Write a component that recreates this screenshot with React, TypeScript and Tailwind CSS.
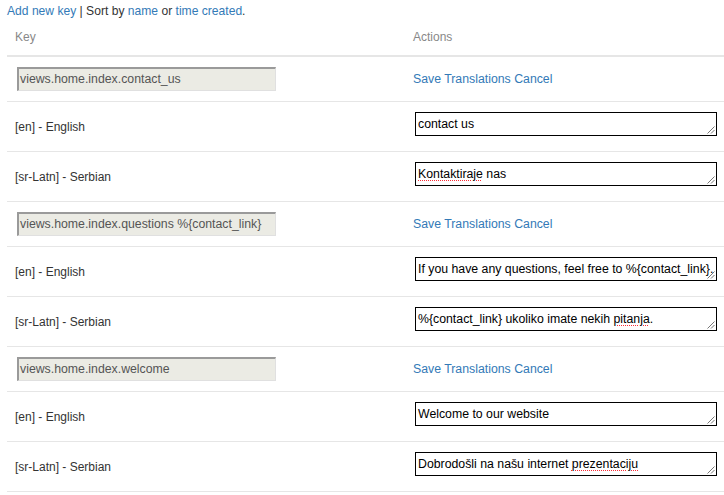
import React from "react";

const font = { fontFamily: '"Liberation Sans", Arial, sans-serif' };

function Resize() {
  return (
    <svg className="absolute right-[1px] bottom-[1px]" width="9" height="9" viewBox="0 0 9 9">
      <line x1="8.5" y1="1.5" x2="1.5" y2="8.5" stroke="#777" strokeWidth="1" />
      <line x1="8.5" y1="5" x2="5" y2="8.5" stroke="#777" strokeWidth="1" />
    </svg>
  );
}

function Spell({ children }: { children: React.ReactNode }) {
  return <span className="underline decoration-dotted decoration-red-500 decoration-1 underline-offset-2">{children}</span>;
}

function KeyRow({ k }: { k: string }) {
  return (
    <div className="flex h-[45px] border-b border-[#e6e6e6] items-center">
      <div className="w-[398px] pl-[10px]">
        <div className="w-[259px] h-[24px] bg-[#ebebe4] border-t-2 border-l-2 border-t-[#9a9a9a] border-l-[#9a9a9a] border-r border-b border-r-[#e0e0e0] border-b-[#e0e0e0] text-[12.3px] leading-[20px] text-[#555] pl-[1px] whitespace-nowrap overflow-hidden">
          {k}
        </div>
      </div>
      <div className="pl-[8px] text-[12.3px] text-[#337ab7]">Save Translations Cancel</div>
    </div>
  );
}

function TrRow({ label, children }: { label: string; children: React.ReactNode }) {
  return (
    <div className="flex h-[50px] border-b border-[#e6e6e6]">
      <div className="w-[398px] pl-[8px] flex items-center text-[12px] text-[#333]">{label}</div>
      <div className="pl-[10px] pt-[10px]">
        <div className="relative w-[302px] h-[24px] border border-black bg-white text-[12.3px] leading-[22px] text-black pl-[2px] whitespace-nowrap overflow-hidden">
          {children}
          <Resize />
        </div>
      </div>
    </div>
  );
}

export default function App() {
  return (
    <div className="w-[724px] h-[495px] bg-white overflow-hidden" style={font}>
      <div className="pl-[7px] pt-[3px] text-[12.1px] leading-[16px] text-[#333]">
        <span className="text-[#337ab7]">Add new key</span> | Sort by <span className="text-[#337ab7]">name</span> or{" "}
        <span className="text-[#337ab7]">time created</span>.
      </div>
      <div className="ml-[7px] mt-[3px]">
        <div className="flex h-[35px] border-b-2 border-[#e6e6e6] items-center text-[12px] text-[#888] pb-[3px]">
          <div className="w-[398px] pl-[8px]">Key</div>
          <div className="pl-[8px]">Actions</div>
        </div>
        <KeyRow k="views.home.index.contact_us" />
        <TrRow label="[en] - English">contact us</TrRow>
        <TrRow label="[sr-Latn] - Serbian">
          <Spell>Kontaktiraje</Spell> nas
        </TrRow>
        <KeyRow k="views.home.index.questions %{contact_link}" />
        <TrRow label="[en] - English">If you have any questions, feel free to %{"{"}contact_link{"}"}.</TrRow>
        <TrRow label="[sr-Latn] - Serbian">
          %{"{"}contact_link{"}"} ukoliko imate nekih <Spell>pitanja</Spell>.
        </TrRow>
        <KeyRow k="views.home.index.welcome" />
        <TrRow label="[en] - English">Welcome to our website</TrRow>
        <TrRow label="[sr-Latn] - Serbian">
          Dobrodošli na našu internet <Spell>prezentaciju</Spell>
        </TrRow>
      </div>
    </div>
  );
}
